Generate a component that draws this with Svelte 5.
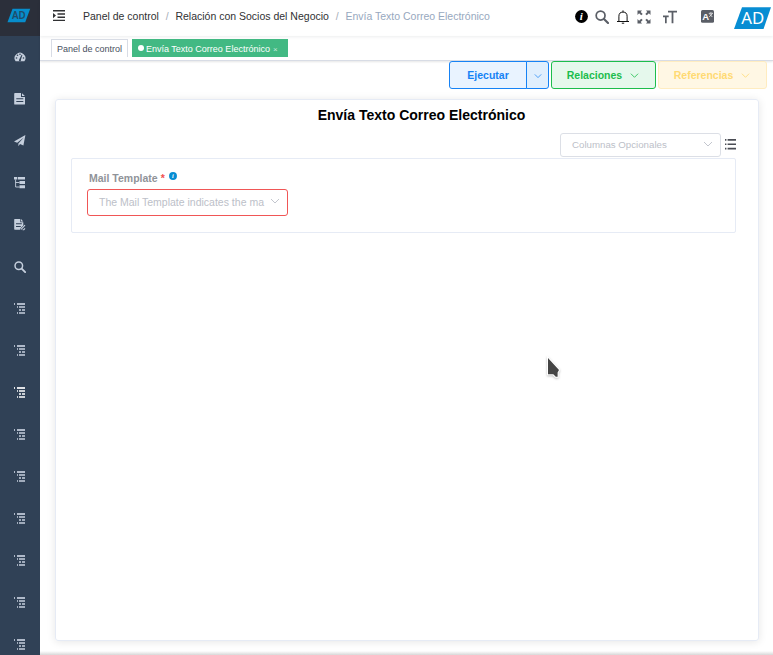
<script>
  const lists = Array.from({ length: 9 }, (_, i) => i);
</script>

{#snippet chevron(size)}
  <svg class="chev" width={size} height={size} viewBox="0 0 10 10" fill="none" stroke="currentColor" stroke-width="0.9"><path d="M1 3l4 4 4-4" /></svg>
{/snippet}

{#snippet magnifier(size)}
  <svg width={size} height={size} viewBox="0 0 13 13" fill="none" stroke="currentColor"><circle cx="5.2" cy="5.2" r="4.1" stroke-width="1.6" /><path d="M8.3 8.3l3.8 3.8" stroke-width="2" stroke-linecap="round" /></svg>
{/snippet}

<div class="app">
  <aside>
    <div class="brand">
      <svg width="24" height="16" viewBox="0 0 24 16"><path d="M5.5 .8H23.2L18.2 14.3H.5z" fill="#078dcc" /><text x="11.8" y="11.3" text-anchor="middle" class="small-ad" font-size="9.8">AD</text></svg>
    </div>
    <div class="item">
      <svg width="12" height="12" viewBox="0 0 12 12"><path d="M1.6 10.3A5.4 5.4 0 1 1 10.4 10.3Z" fill="currentColor" /><g fill="#304156"><circle cx="2.5" cy="7" r=".8" /><circle cx="3.5" cy="4.3" r=".8" /><circle cx="6" cy="3.2" r=".8" /><circle cx="9.5" cy="7" r=".8" /><path d="M5.2 8.6L7.6 3.7l.8.3-1.5 4.8a1 1 0 1 1-1.7-.2z" /></g></svg>
    </div>
    <div class="item">
      <svg width="12" height="12" viewBox="0 0 12 12"><path fill="currentColor" fill-rule="evenodd" d="M1 0H7v3.9h4V11q0 .6-.6.6H1Q.2 11.6.2 11V.7Q.2 0 1 0zM8 .2L10.9 3.1H8zM2.3 5.2v1h7v-1zM2.3 8v1h7V8z" /></svg>
    </div>
    <div class="item">
      <svg width="12" height="12" viewBox="0 0 12 12"><path fill="currentColor" d="M11.4 0L9.4 10.4 6 9 4.4 11.2V8.4L9.8 2.4 3.2 7.8 0 6.5z" /></svg>
    </div>
    <div class="item">
      <svg width="12" height="12" viewBox="0 0 12 12"><path fill="currentColor" d="M0 0h3.3v2.6H0zM4 0h7v2.6H4zM5.5 4H11v3H5.5zM5.5 8.3H11v2.9H5.5z" /><path d="M1.6 2.5v7.5h3.9M1.6 5.5h3.9" fill="none" stroke="currentColor" stroke-width=".9" /></svg>
    </div>
    <div class="item">
      <svg width="12" height="12" viewBox="0 0 12 12"><path fill="currentColor" fill-rule="evenodd" d="M.8 0h5.5v3.3h3v3.2L6.6 9.2l-.5 1.5H.8q-.6 0-.6-.6V.6Q.2 0 .8 0zM7 .1l2.3 2.4H7zM2 4.3v.9h5.8v-.9zM2 7v.9h4.8V7z" /><path d="M7 10.4l4-4.2M8.6 10.8h1.2l1.2-1.5" fill="none" stroke="currentColor" stroke-width="1.1" /></svg>
    </div>
    <div class="item">{@render magnifier(12)}</div>
    {#each lists as i}
      <div class="item" class:active={i === 2}>
        <svg width="12" height="12" viewBox="0 0 12 12" shape-rendering="crispEdges"><path fill="currentColor" d="M0 0h1v2H0zM3 0h8v2H3z" opacity=".85" /><path fill="currentColor" d="M3 3h1v2H3zM5 3h6v2H5zM5 6h2v2H5zM8 6h3v2H8zM3 9h1v2H3zM5 9h6v2H5z" opacity=".75" /></svg>
      </div>
    {/each}
  </aside>

  <main>
    <header>
      <svg class="fold" width="12" height="12" viewBox="0 0 12 12"><path fill="#303133" d="M0 0h12v1.4H0zM4.5 3.3H12v1.4H4.5zM4.5 6.5H12v1.4H4.5zM0 9.7h12v1.4H0zM0 3l3 2.6L0 8.2z" /></svg>
      <nav>
        <span>Panel de control</span><i>/</i><span>Relación con Socios del Negocio</span><i>/</i><span class="last">Envía Texto Correo Electrónico</span>
      </nav>
      <div class="tools">
        <svg width="13" height="13" viewBox="0 0 13 13"><circle cx="6.5" cy="6.5" r="6.4" /><text x="6.3" y="10.2" text-anchor="middle" class="info" font-size="11">i</text></svg>
        <span class="t-search">{@render magnifier(14)}</span>
        <svg class="t-bell" width="14" height="14" viewBox="0 0 14 14" fill="none" stroke="#111" stroke-width="1"><path d="M1 11.5h12M2.9 11.4V6.2a4.1 4.1 0 0 1 8.2 0v5.2M7 .4V2M5.8 13.2h2.4" /></svg>
        <svg class="t-full" width="14" height="14" viewBox="0 0 14 14" fill="#5a5e66"><path d="M.5.5H5L3.7 1.9 5.7 3.9 4.2 5.3 2.1 3.3.5 4.9zM13.5.5H9l1.3 1.4-2 2 1.5 1.4 2.1-2 1.6 1.6zM.5 13.5H5l-1.3-1.4 2-2-1.5-1.4-2.1 2L.5 9.1zM13.5 13.5H9l1.3-1.4-2-2 1.5-1.4 2.1 2 1.6-1.6z" /></svg>
        <svg class="t-size" width="14" height="14" viewBox="0 0 14 14" fill="#5a5e66"><path d="M5 .8h9v1.7h-3.6v10.8H8.6V2.5H5zM0 5.6h5.7v1.6H3.7v6.1H2V7.2H0z" /></svg>
        <svg class="t-lang" width="13" height="13" viewBox="0 0 13 13"><rect width="13" height="12.8" rx="1.5" fill="#5a5e66" /><text x="4.6" y="10" text-anchor="middle" font-size="9.5" font-weight="bold" fill="#fff">A</text><path d="M7.8 3.3h4.2M8.4 3.6l2.9 3.4M11.4 3.6L8.2 7M9.9 2.2v1.1" fill="none" stroke="#fff" stroke-width=".7" /></svg>
        <svg class="t-logo" width="37" height="22" viewBox="0 0 37 22"><path d="M8 .2H37L29.5 22H0z" fill="#078dd3" /><text x="18.8" y="17.2" text-anchor="middle" class="ad" font-size="16.8">AD</text></svg>
      </div>
    </header>

    <div class="tabs">
      <span class="tab">Panel de control</span>
      <span class="tab on"><b></b><span>Envía Texto Correo Electrónico</span><em>×</em></span>
    </div>

    <div class="actions">
      <div class="btn blue run">Ejecutar</div>
      <div class="btn blue drop">{@render chevron(8)}</div>
      <div class="btn green">Relaciones {@render chevron(9)}</div>
      <div class="btn yellow">Referencias {@render chevron(9)}</div>
    </div>

    <section class="card">
      <h1>Envía Texto Correo Electrónico</h1>
      <div class="options">
        <div class="select optional"><span>Columnas Opcionales</span>{@render chevron(10)}</div>
        <svg width="11" height="11" viewBox="0 0 11 11"><path fill="#4a4d54" d="M0 0h1.4v1.7H0zM2.6 0H11v1.7H2.6zM0 4.4h1.4v1.7H0zM2.6 4.4H11v1.7H2.6zM0 8.8h1.4v1.7H0zM2.6 8.8H11v1.7H2.6z" /></svg>
      </div>
      <div class="panel">
        <div class="label">Mail Template <span>*</span><svg width="8" height="8" viewBox="0 0 13 13"><circle cx="6.5" cy="6.5" r="6.4" fill="#078dd3" /><text x="6.3" y="10.2" text-anchor="middle" class="info" font-size="10">i</text></svg></div>
        <div class="select template"><span>The Mail Template indicates the ma</span>{@render chevron(10)}</div>
      </div>
    </section>
    <div class="bottom"></div>
  </main>

  <svg class="cursor" width="18" height="24" viewBox="0 0 18 24"><path d="M3 2v16.2h5.3l2.5 2.6h1.8v-4.2L14 14z" fill="#444" stroke="#fff" stroke-width="2" paint-order="stroke" /></svg>
</div>

<style>
  :global(body) { overflow: hidden; }
  .app { position: relative; display: flex; width: 773px; height: 655px; overflow: hidden; background: #fff; font-family: "Liberation Sans", Arial, sans-serif; white-space: nowrap; }
  .app * { box-sizing: border-box; }
  svg { display: block; flex: none; }
  aside { width: 40px; flex: none; background: #304156; color: #c5cfdd; }
  .brand { height: 36px; background: #2b2f3a; padding: 8px 0 0 7px; }
  .small-ad { fill: #1f4b69; font-family: "Noto Sans", sans-serif; font-weight: 600; }
  .item { height: 42px; display: flex; align-items: center; padding-left: 14px; }
  .active { color: #fff; }
  main { flex: 1; display: flex; flex-direction: column; min-width: 0; }
  header { height: 36px; flex: none; display: flex; align-items: center; padding: 0 2px 3px 13px; box-shadow: 0 1px 3px rgba(0, 21, 41, .08); }
  .fold { margin-top: -1px; }
  nav { display: flex; margin: -1px 0 0 18px; font-size: 10.5px; color: #303133; }
  nav i { width: 16.5px; text-align: center; color: #a6acb8; font-style: normal; }
  .last { color: #97a8be; }
  .tools { display: flex; align-items: center; margin-left: auto; color: #5a5e66; }
  .info { font-family: "Liberation Serif", serif; font-weight: bold; font-style: italic; fill: #fff; }
  .t-search { margin-left: 7px; }
  .t-bell { margin-left: 7px; }
  .t-full { margin-left: 7px; }
  .t-size { margin-left: 12px; }
  .t-lang { margin-left: 24px; }
  .t-logo { margin: 3px 0 0 20px; }
  .ad { fill: #fff; font-family: "Noto Sans", sans-serif; }
  .tabs { height: 25px; flex: none; display: flex; gap: 4px; padding: 3px 0 0 11px; border-bottom: 1px solid #d8dce5; box-shadow: 0 1px 2px rgba(0, 0, 0, .1); }
  .tab { height: 18px; width: 77px; padding-left: 5px; border: 1px solid #d8dce5; border-bottom: 0; color: #495060; font-size: 9px; line-height: 19px; }
  .on { display: flex; align-items: center; width: 156px; background: #42b983; border-color: #42b983; color: #fff; }
  .on span { margin-top: 2px; }
  .on b { width: 6px; height: 6px; margin: 0 2px 1px 0; border-radius: 50%; background: #fff; }
  .on em { margin: 2px 0 0 3px; font-style: normal; font-size: 8px; color: #c5e8d9; }
  .actions { display: flex; justify-content: flex-end; padding-right: 6px; }
  .btn { height: 28px; display: flex; align-items: center; justify-content: center; gap: 8px; border: 1px solid; border-radius: 3px; font-size: 10.5px; font-weight: bold; }
  .blue { color: #1682f5; background: #e9f3ff; }
  .run { width: 78px; border-radius: 3px 0 0 3px; }
  .drop { width: 23px; margin-left: -1px; border-radius: 0 3px 3px 0; background: #e0effd; }
  .drop svg { margin-top: 2px; }
  .green { width: 105px; margin-left: 2px; padding-right: 1px; color: #1cbd4c; background: #e5f8ec; }
  .yellow { width: 109px; margin-left: 2px; padding-right: 1px; color: #ffda73; background: #fff7e4; border-color: #ffecc0; }
  .card { width: 704px; height: 542px; margin: 10px 0 0 15px; padding: 5px 22px 0 15px; border: 1px solid #e6ebf5; border-radius: 3px; box-shadow: 0 1px 9px rgba(0, 0, 0, .1); }
  h1 { width: 664px; margin: 0; padding-left: 37px; text-align: center; font-size: 14.03px; line-height: 20px; color: #000; }
  .options { display: flex; justify-content: flex-end; align-items: center; gap: 4px; margin-top: 8px; }
  .select { display: flex; align-items: center; justify-content: space-between; border: 1px solid #dcdfe6; border-radius: 3px; color: #bcc0c8; }
  .select svg { margin-top: -2px; }
  .optional { width: 161px; height: 24px; padding: 0 7px 1px 11px; font-size: 9.7px; }
  .options > svg { margin-top: -2px; }
  .panel { width: 665px; height: 75px; margin-top: 1px; padding: 12px 0 0 15px; border: 1px solid #e6ebf5; border-radius: 2px; }
  .label { display: flex; height: 14px; padding-left: 2px; color: #909399; font-size: 10.5px; font-weight: bold; line-height: 15px; }
  .label span { margin-left: 3px; color: #f05050; }
  .label svg { margin: 1px 0 0 4px; }
  .template { width: 201px; height: 27px; margin-top: 4px; padding: 0 7px 1px 11px; border-color: #f05656; font-size: 10.5px; }
  .bottom { height: 4px; margin-top: auto; background: linear-gradient(#fff, #d8d8d8); }
  .cursor { position: absolute; left: 545px; top: 356px; filter: drop-shadow(0 1px 1px rgba(0, 0, 0, .25)); }
</style>
